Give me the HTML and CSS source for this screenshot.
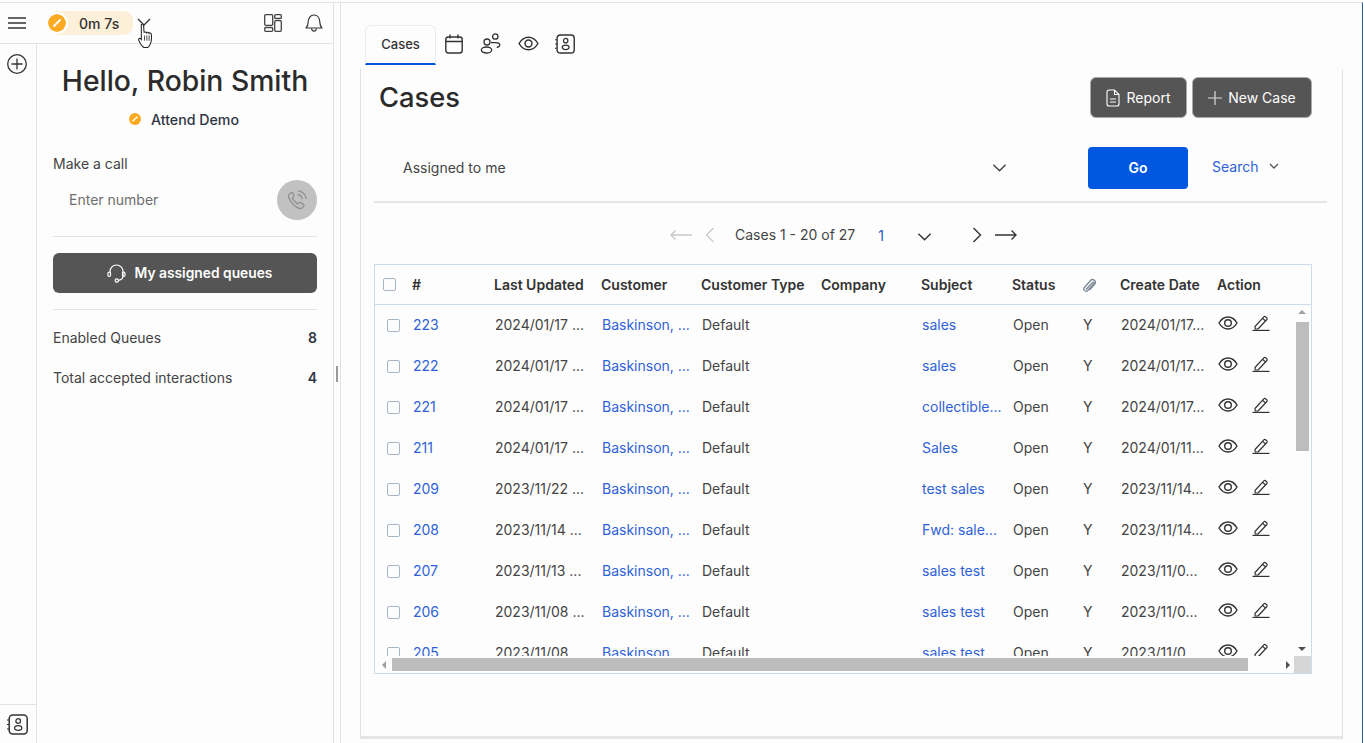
FILE: index.html
```html
<!DOCTYPE html>
<html lang="en">
<head>
  <meta charset="UTF-8">
  <title>Cases</title>
  <link rel="stylesheet" href="styles.css">
</head>
<body>
  <svg class="icon-defs" width="0" height="0">
    <symbol id="i-eye" viewBox="0 0 20 14">
      <path d="M1 7c2.200-3.800 5.300-6 9-6s6.800 2.200 9 6c-2.200 3.800-5.300 6-9 6s-6.800-2.200-9-6z" fill="none" stroke="currentColor" stroke-width="1.400"/>
      <circle cx="10" cy="7" r="3.300" fill="none" stroke="currentColor" stroke-width="1.400"/>
    </symbol>
    <symbol id="i-edit" viewBox="0 0 18 16">
      <path d="M3 11.500 11.800 1.800c.5-.5 1.200-.5 1.700-.1l1.300 1.100c.5.500.5 1.200.1 1.700L6 14H3.200z M10.500 3.200l3.200 2.900" fill="none" stroke="currentColor" stroke-width="1.200" stroke-linejoin="round"/>
      <path d="M0.500 15.400H17.500" stroke="currentColor" stroke-width="1.200"/>
    </symbol>
    <symbol id="i-contact" viewBox="0 0 21 21">
      <rect x="2.200" y="1" width="18" height="19" rx="3.500" fill="none" stroke="currentColor" stroke-width="1.500"/>
      <circle cx="11.200" cy="7" r="2.300" fill="none" stroke="currentColor" stroke-width="1.300"/>
      <ellipse cx="11.200" cy="14" rx="3.600" ry="2.300" fill="none" stroke="currentColor" stroke-width="1.300"/>
      <path d="M0 6h2M0 10.500h2M0 15h2" stroke="currentColor" stroke-width="1.100"/>
    </symbol>
    <symbol id="i-block" viewBox="0 0 18 18">
      <circle cx="9" cy="9" r="9" fill="#fbaa21"/>
      <path d="M5.500 12.500 12.500 5.500" stroke="#fff" stroke-width="2"/>
    </symbol>
    <symbol id="i-chev" viewBox="0 0 16 10">
      <path d="M1.500 1.500 8 8l6.500-6.500" fill="none" stroke="currentColor" stroke-width="1.500"/>
    </symbol>
  </svg>

  <div class="app">
    <aside class="side">
      <header class="side-top">
        <svg class="menu-icon" width="18" height="12" viewBox="0 0 18 12"><path d="M0 1h18M0 6h18M0 11h18" stroke="#333" stroke-width="1.300"/></svg>
        <div class="status-pill">
          <svg class="status-dot" width="18" height="18"><use href="#i-block"/></svg>
          <span>0m 7s</span>
        </div>
        <svg class="status-chev" width="14" height="8" viewBox="0 0 14 8"><path d="M1 1l6 6 6-6" fill="none" stroke="#333" stroke-width="1.300"/></svg>
        <svg class="top-layout" width="18" height="18" viewBox="0 0 18 18" fill="none" stroke="#444" stroke-width="1.300">
          <rect x=".7" y=".7" width="8" height="10.600" rx="1"/><rect x=".7" y="13.500" width="8" height="3.800" rx="1"/>
          <rect x="10.700" y=".7" width="6.600" height="3.800" rx="1"/><rect x="10.700" y="6.700" width="6.600" height="10.600" rx="1"/>
        </svg>
        <svg class="top-bell" width="18" height="18" viewBox="0 0 18 18" fill="none" stroke="#333" stroke-width="1.200">
          <path d="M1 14c1.500-1.300 2.100-2.500 2.100-5.500C3.100 4 5.500 1 9 1s5.900 3 5.900 7.500c0 3 .6 4.200 2.100 5.500z" stroke-linejoin="round"/>
          <path d="M6.500 14.500c.2 1.600 1.200 2.600 2.500 2.600s2.300-1 2.500-2.600"/>
        </svg>
        <!-- cursor from the screen capture -->
        <svg class="cursor" width="17" height="24" viewBox="1 1 14 23">
          <path d="M4 1.500c.8-.8 2-.4 2.200.8l.4 7c.3-1 2.100-1 2.400.2.500-.9 2-.8 2.300.4.600-.7 2-.4 2.200.8.500 3.200.4 6.600-.8 9.300-.6 1.500-1.500 3-2.700 3.500H6.500c-1.700-1-3.500-3.700-5-7-.5-1.300.7-2.200 1.800-1.400l.7.800z" fill="#fff" stroke="#222" stroke-width="1"/>
          <path d="M7 12v5M9.300 12v5M11.500 12v5" stroke="#222" stroke-width=".8"/>
        </svg>
      </header>
      <div class="side-body">
        <nav class="rail">
          <svg width="20" height="20" viewBox="0 0 20 20" fill="none" stroke="#333" stroke-width="1.300"><circle cx="10" cy="10" r="9.300"/><path d="M10 4.500v11M4.500 10h11"/></svg>
          <div class="rail-foot">
            <svg class="rail-contact" width="21" height="21"><use href="#i-contact"/></svg>
          </div>
        </nav>
        <section class="agent">
          <h2 class="hello">Hello, Robin Smith</h2>
          <div class="agent-status">
            <svg width="12" height="12"><use href="#i-block"/></svg>
            <span>Attend Demo</span>
          </div>
          <div class="call-label">Make a call</div>
          <div class="call-row">
            <span class="call-input">Enter number</span>
            <button class="call-btn">
              <svg width="22" height="22" viewBox="0 0 22 22" fill="none" stroke="#8f8f8f" stroke-width="1.300">
                <path d="M5.500 3.500 3.200 5.200c-1 .8-.9 2.400 0 4.300 1.500 3.300 4.400 6.900 7.800 8.900 2 1.100 3.900 1.600 5 .6l1.700-1.900c.5-.6.300-1.300-.3-1.700l-2.900-1.800c-.6-.4-1.200-.3-1.600.2l-.9 1c-1.800-.7-4.600-3.600-5.600-6l1-.9c.5-.5.600-1.100.3-1.700L6.900 3.800c-.4-.6-1-.7-1.400-.3z"/>
                <path d="M11.500 5.500c2.500.2 4.300 2 4.700 4.600M12 1.800c4.200.3 7.700 3.500 8.300 8"/>
              </svg>
            </button>
          </div>
          <button class="queues-btn">
            <svg width="19" height="19" viewBox="0 0 19 19" fill="none" stroke="#fff" stroke-width="1.200">
              <path d="M3 9V7.500C3 3.800 5.800 1 9.500 1S16 3.800 16 7.500V12c0 2.500-2 4-4.500 4.300"/>
              <rect x="1" y="8" width="2.500" height="4.500" rx="1.200"/><rect x="15.500" y="8" width="2.500" height="4.500" rx="1.200"/>
              <circle cx="9.800" cy="16.500" r="1.700"/>
            </svg>
            <span>My assigned queues</span>
          </button>
          <div class="stat"><span>Enabled Queues</span><b>8</b></div>
          <div class="stat"><span>Total accepted interactions</span><b>4</b></div>
        </section>
      </div>
    </aside>

    <div class="resizer"><i></i></div>

    <main class="main">
      <div class="tabs">
        <div class="tab">Cases</div>
        <svg class="tab-icon tab-cal" width="18" height="20" viewBox="0 0 18 20" fill="none" stroke="#333" stroke-width="1.400">
          <rect x=".8" y="3" width="16.400" height="16" rx="2.500"/><path d="M.8 7.500h16.400M5 .5v4M13 .5v4"/>
        </svg>
        <svg class="tab-icon tab-people" width="22" height="21" viewBox="0 0 21 21" fill="none" stroke="#333" stroke-width="1.300">
          <circle cx="6.500" cy="9" r="3"/><ellipse cx="6" cy="17" rx="5.200" ry="3"/><circle cx="14.800" cy="3.500" r="2.700"/>
          <path d="M10.500 9.500c2.500.6 6.500-.5 8 .8 1.800 1.600.4 3.800-2.300 4.200"/>
        </svg>
        <svg class="tab-icon tab-eye" width="21" height="15"><use href="#i-eye"/></svg>
        <svg class="tab-icon tab-contact" width="20" height="20"><use href="#i-contact"/></svg>
      </div>

      <section class="card">
        <div class="card-head">
          <h1>Cases</h1>
          <div class="card-actions">
            <button class="dark-btn report-btn">
              <svg width="14" height="18" viewBox="0 0 14 18" fill="none" stroke="#fff" stroke-width="1.100"><path d="M1 3a2 2 0 0 1 2-2h5.500L13 5.500V15a2 2 0 0 1-2 2H3a2 2 0 0 1-2-2z M8.500 1v4.500H13 M4 10h6M4 13h6"/></svg>
              <span>Report</span>
            </button>
            <button class="dark-btn new-btn">
              <svg width="14" height="14" viewBox="0 0 14 14" stroke="#ddd" stroke-width="1.200"><path d="M7 0v14M0 7h14"/></svg>
              <span>New Case</span>
            </button>
          </div>
        </div>

        <div class="filter">
          <div class="filter-select">
            <span>Assigned to me</span>
            <svg width="15" height="10"><use href="#i-chev"/></svg>
          </div>
          <button class="go-btn">Go</button>
          <a class="search-link">Search</a>
          <svg class="search-chev" width="10" height="6" viewBox="0 0 10 6"><path d="M1 1l4 4 4-4" fill="none" stroke="#555" stroke-width="1.300"/></svg>
        </div>

        <div class="pager">
          <svg class="off pg-first" width="22" height="10" viewBox="0 0 22 10" fill="none" stroke="currentColor" stroke-width="1.400"><path d="M22 5H1M5.500.5 1 5l4.500 4.500"/></svg>
          <svg class="off pg-prev" width="10" height="16" viewBox="0 0 10 16" fill="none" stroke="currentColor" stroke-width="1.300"><path d="M8.500 1 1.500 8l7 7"/></svg>
          <span class="pg-text">Cases 1 - 20 of 27</span>
          <span class="pg-num">1</span>
          <svg class="pg-drop" width="15" height="10"><use href="#i-chev"/></svg>
          <svg class="pg-next" width="10" height="16" viewBox="0 0 10 16" fill="none" stroke="#333" stroke-width="1.400"><path d="M1.500 1l7 7-7 7"/></svg>
          <svg class="pg-last" width="22" height="10" viewBox="0 0 22 10" fill="none" stroke="#333" stroke-width="1.400"><path d="M0 5h21M16.500.5 21 5l-4.500 4.500"/></svg>
        </div>

        <div class="grid">
          <div class="row head-row">
            <div><span class="check head-check"></span></div>
            <div>#</div><div>Last Updated</div><div>Customer</div><div>Customer Type</div><div>Company</div><div>Subject</div><div>Status</div>
            <div><svg class="clip" width="17" height="15" viewBox="0 0 16 15" fill="none" stroke="#7b8794" stroke-width="1.300"><path d="M4.500 12.500 11 5.500c.8-.9 2.200.4 1.400 1.300L6 13.700c-1.700 1.700-5 -.8-3.100-3.200L9 3.500c2.200-2.500 6.500.6 4.300 3.500L8 13"/></svg></div>
            <div>Create Date</div><div>Action</div>
          </div>

          <div class="row"><div><span class="check"></span></div><div><a>223</a></div><div>2024/01/17 ...</div><div><a>Baskinson, ...</a></div><div>Default</div><div></div><div><a>sales</a></div><div>Open</div><div>Y</div><div>2024/01/17...</div><div class="acts"><svg class="eye" width="20" height="14"><use href="#i-eye"/></svg><svg class="edit" width="18" height="16"><use href="#i-edit"/></svg></div></div>
          <div class="row"><div><span class="check"></span></div><div><a>222</a></div><div>2024/01/17 ...</div><div><a>Baskinson, ...</a></div><div>Default</div><div></div><div><a>sales</a></div><div>Open</div><div>Y</div><div>2024/01/17...</div><div class="acts"><svg class="eye" width="20" height="14"><use href="#i-eye"/></svg><svg class="edit" width="18" height="16"><use href="#i-edit"/></svg></div></div>
          <div class="row"><div><span class="check"></span></div><div><a>221</a></div><div>2024/01/17 ...</div><div><a>Baskinson, ...</a></div><div>Default</div><div></div><div><a>collectible...</a></div><div>Open</div><div>Y</div><div>2024/01/17...</div><div class="acts"><svg class="eye" width="20" height="14"><use href="#i-eye"/></svg><svg class="edit" width="18" height="16"><use href="#i-edit"/></svg></div></div>
          <div class="row"><div><span class="check"></span></div><div><a>211</a></div><div>2024/01/17 ...</div><div><a>Baskinson, ...</a></div><div>Default</div><div></div><div><a>Sales</a></div><div>Open</div><div>Y</div><div>2024/01/11...</div><div class="acts"><svg class="eye" width="20" height="14"><use href="#i-eye"/></svg><svg class="edit" width="18" height="16"><use href="#i-edit"/></svg></div></div>
          <div class="row"><div><span class="check"></span></div><div><a>209</a></div><div>2023/11/22 ...</div><div><a>Baskinson, ...</a></div><div>Default</div><div></div><div><a>test sales</a></div><div>Open</div><div>Y</div><div>2023/11/14...</div><div class="acts"><svg class="eye" width="20" height="14"><use href="#i-eye"/></svg><svg class="edit" width="18" height="16"><use href="#i-edit"/></svg></div></div>
          <div class="row"><div><span class="check"></span></div><div><a>208</a></div><div>2023/11/14 ...</div><div><a>Baskinson, ...</a></div><div>Default</div><div></div><div><a>Fwd: sale...</a></div><div>Open</div><div>Y</div><div>2023/11/14...</div><div class="acts"><svg class="eye" width="20" height="14"><use href="#i-eye"/></svg><svg class="edit" width="18" height="16"><use href="#i-edit"/></svg></div></div>
          <div class="row"><div><span class="check"></span></div><div><a>207</a></div><div>2023/11/13 ...</div><div><a>Baskinson, ...</a></div><div>Default</div><div></div><div><a>sales test</a></div><div>Open</div><div>Y</div><div>2023/11/0...</div><div class="acts"><svg class="eye" width="20" height="14"><use href="#i-eye"/></svg><svg class="edit" width="18" height="16"><use href="#i-edit"/></svg></div></div>
          <div class="row"><div><span class="check"></span></div><div><a>206</a></div><div>2023/11/08 ...</div><div><a>Baskinson, ...</a></div><div>Default</div><div></div><div><a>sales test</a></div><div>Open</div><div>Y</div><div>2023/11/0...</div><div class="acts"><svg class="eye" width="20" height="14"><use href="#i-eye"/></svg><svg class="edit" width="18" height="16"><use href="#i-edit"/></svg></div></div>
          <div class="row"><div><span class="check"></span></div><div><a>205</a></div><div>2023/11/08 ...</div><div><a>Baskinson, ...</a></div><div>Default</div><div></div><div><a>sales test</a></div><div>Open</div><div>Y</div><div>2023/11/0...</div><div class="acts"><svg class="eye" width="20" height="14"><use href="#i-eye"/></svg><svg class="edit" width="18" height="16"><use href="#i-edit"/></svg></div></div>

          <!-- scrollbars sit on top of the rows -->
          <div class="vbar"><i class="arrow-up"></i><b></b><i class="arrow-down"></i></div>
          <div class="hbar"><i class="arrow-left"></i><b></b><i class="arrow-right"></i></div>
          <div class="corner"></div>
        </div>
      </section>
    </main>
  </div>
</body>
</html>
```

FILE: styles.css
```css
* {
  box-sizing: border-box;
  margin: 0;
  padding: 0;
}

html, body {
  height: 100%;
  overflow: hidden;
}

body {
  font-family: Inter, "Noto Sans", sans-serif;
  font-size: 14px;
  color: #333;
  background-color: #fdfdfd;
  padding-top: 2px;
}

button {
  font-family: inherit;
  border: none;
}

svg {
  display: block;
  flex: none;
}

.icon-defs {
  position: absolute;
}

.app {
  display: flex;
  height: 741px;
  border-top: 1px solid #e4e4e4;
  border-right: 1px solid #1f5f99;
}

/* Panel izquierdo */
.side {
  width: 334px;
  flex: none;
  border-right: 1px solid #e2e2e2;
  display: flex;
  flex-direction: column;
}

.side-top {
  height: 41px;
  flex: none;
  position: relative;
  display: flex;
  align-items: center;
  border-bottom: 1px solid #e2e2e2;
  padding-left: 8px;
}

.status-pill {
  display: flex;
  align-items: center;
  width: 85px;
  height: 24px;
  margin-left: 22px;
  background-color: #fdf0d9;
  border-radius: 9px;
  font-weight: 500;
  color: #333;
}

.status-dot {
  border-radius: 50%;
  box-shadow: 0 0 0 2px #fff;
}

.status-pill span {
  margin-left: 13px;
}

.status-chev {
  margin-left: 4px;
  margin-top: -3px;
}

.top-layout {
  margin-left: 113px;
  margin-top: -1px;
}

.top-bell {
  margin-left: 23px;
  margin-top: -1px;
}

.cursor {
  position: absolute;
  left: 137px;
  top: 21px;
}

.side-body {
  flex: 1;
  display: flex;
  min-height: 0;
}

.rail {
  width: 37px;
  flex: none;
  border-right: 1px solid #e2e2e2;
  padding: 10px 0 0 7px;
  position: relative;
  display: flex;
  flex-direction: column;
  justify-content: space-between;
}

.rail-foot {
  margin-left: -7px;
  width: 36px;
  height: 39px;
  border-top: 1px solid #e2e2e2;
  padding: 9px 0 0 7px;
}

.agent {
  flex: 1;
  padding: 18px 16px 0;
}

.hello {
  font-size: 28.300px;
  font-weight: 500;
  line-height: 38px;
  color: #2b2b2b;
  text-align: center;
}

.agent-status {
  display: flex;
  justify-content: center;
  align-items: center;
  gap: 10px;
  margin-top: 9px;
  height: 20px;
  font-size: 14.200px;
  font-weight: 500;
  color: #2f3542;
  padding-right: 2px;
}

.call-label {
  margin-top: 25px;
  line-height: 20px;
  color: #444;
}

.call-row {
  display: flex;
  justify-content: space-between;
  align-items: center;
  margin-top: 6px;
  padding: 0 0 16px 16px;
  border-bottom: 1px solid #e4e4e4;
}

.call-input {
  color: #6f6f6f;
  margin-top: -2px;
}

.call-btn {
  width: 40px;
  height: 40px;
  border-radius: 50%;
  background-color: #c1c1c1;
  display: flex;
  align-items: center;
  justify-content: center;
}

.queues-btn {
  width: 100%;
  height: 40px;
  margin-top: 16px;
  margin-bottom: 16px;
  padding-left: 9px;
  background-color: #555;
  color: #fff;
  border-radius: 6px;
  font-size: 13.800px;
  font-weight: 600;
  display: flex;
  align-items: center;
  justify-content: center;
  gap: 9px;
}

.stat {
  display: flex;
  justify-content: space-between;
  align-items: center;
  height: 40px;
  color: #444;
}

.queues-btn + .stat {
  border-top: 1px solid #e4e4e4;
  height: 48px;
  padding-top: 7px;
}

.stat b {
  font-weight: 600;
  color: #2f3542;
}

.resizer {
  width: 6px;
  flex: none;
  padding: 363px 0 0 2px;
}

.resizer i {
  display: block;
  width: 2px;
  height: 16px;
  background-color: #999;
}

/* Area principal */
.main {
  flex: 1;
  min-width: 0;
  border-left: 1px solid #e2e2e2;
  padding-left: 19px;
}

.tabs {
  display: flex;
  align-items: center;
  height: 40px;
  margin-top: 22px;
  padding-left: 5px;
}

.tab {
  width: 71px;
  height: 40px;
  display: flex;
  align-items: center;
  justify-content: center;
  font-size: 13px;
  font-weight: 500;
  color: #333;
  border: 1px solid #ececec;
  border-bottom: 2px solid #0052dd;
  border-radius: 6px 6px 0 0;
  margin-top: -1px;
}

.tab-icon {
  color: #333;
  margin-top: -3px;
}

.tab-cal {
  margin-left: 9px;
}

.tab-people {
  margin-left: 17px;
}

.tab-eye {
  margin-left: 16px;
}

.tab-contact {
  margin-left: 16px;
}

.card {
  width: 983px;
  height: 670px;
  margin-top: 4px;
  border-left: 1px solid #e2e2e2;
  border-right: 1px solid #e2e2e2;
  border-bottom: 3px solid #e6e6e6;
  padding-top: 9px;
}

.card-head {
  display: flex;
  justify-content: space-between;
  height: 40px;
  padding: 0 30px 0 18px;
}

.card-head h1 {
  font-size: 27.300px;
  font-weight: 500;
  line-height: 40px;
  color: #2b2b2b;
}

.card-actions {
  display: flex;
  gap: 5px;
  height: 41px;
  margin-top: -1px;
}

.dark-btn {
  height: 41px;
  background-color: #555;
  border: 1px solid #aaa;
  border-radius: 6px;
  color: #fff;
  font-size: 14px;
  font-weight: 400;
  display: flex;
  align-items: center;
  justify-content: center;
  gap: 6px;
}

.report-btn {
  width: 97px;
}

.new-btn {
  width: 120px;
}

.filter {
  display: flex;
  align-items: center;
  width: 953px;
  margin: 29px 0 0 13px;
  padding: 0 0 12px 29px;
  border-bottom: 2px solid #e3e5e8;
}

.filter-select {
  width: 604px;
  display: flex;
  justify-content: space-between;
  align-items: center;
  color: #444;
}

.filter-select span {
  margin-top: -2px;
}

.go-btn {
  width: 100px;
  height: 42px;
  margin-left: 81px;
  padding-bottom: 2px;
  background-color: #0057e0;
  color: #fff;
  font-size: 14px;
  font-weight: 600;
  border-radius: 4px;
}

.search-link {
  margin-left: 24px;
  color: #2f62d8;
  margin-top: -3px;
}

.search-chev {
  margin-left: 11px;
  margin-top: -4px;
}

.pager {
  display: flex;
  align-items: center;
  height: 24px;
  margin-top: 20px;
  padding-left: 309px;
  color: #444;
}

.off {
  color: #c9c9c9;
}

.pg-prev {
  margin-left: 13px;
}

.pg-text {
  margin-left: 20px;
  margin-top: -2px;
  white-space: nowrap;
}

.pg-num {
  margin-left: 23px;
  color: #1f5fc4;
}

.pg-drop {
  margin-left: 33px;
  margin-top: 3px;
  color: #333;
}

.pg-next {
  margin-left: 40px;
}

.pg-last {
  margin-left: 13px;
}

/* Tabla */
.grid {
  position: relative;
  overflow: hidden;
  width: 938px;
  height: 410px;
  margin: 17px 0 0 13px;
  border: 1px solid #cfdbe8;
}

.row {
  display: grid;
  grid-template-columns: 37px 82px 107px 100px 120px 100px 91px 70px 38px 97px 1fr;
  align-items: center;
  height: 41px;
  padding-bottom: 2px;
  color: #444;
  white-space: nowrap;
}

.row > div {
  padding-left: 1px;
}

.row a {
  color: #2f62d8;
}

.head-row {
  height: 40px;
  padding-bottom: 0;
  border-bottom: 1px solid #cfdbe8;
  font-size: 14px;
  font-weight: 600;
  color: #333;
}

.head-row > div {
  padding-left: 0;
}

.check {
  display: block;
  width: 13px;
  height: 13px;
  margin-left: 11px;
  margin-top: 1px;
  border: 1px solid #a9b6c6;
  border-radius: 2px;
}

.head-check {
  margin-left: 8px;
  margin-top: 0;
}

.clip {
  margin-left: -1px;
}

.acts {
  display: flex;
  align-items: center;
  gap: 14px;
  margin-top: -3px;
  color: #333;
}

.vbar {
  position: absolute;
  top: 40px;
  right: 0;
  width: 17px;
  height: 351px;
  background-color: #fdfdfd;
  padding: 17px 2px 0;
}

.vbar b {
  display: block;
  width: 13px;
  height: 129px;
  background-color: #bdbdbd;
}

.arrow-up,
.arrow-down,
.arrow-left,
.arrow-right {
  position: absolute;
  width: 0;
  height: 0;
  border: 4px solid transparent;
}

.arrow-up {
  top: 1px;
  left: 4px;
  border-bottom-color: #a0a0a0;
}

.arrow-down {
  bottom: 1px;
  left: 4px;
  border-top-color: #505050;
}

.hbar {
  position: absolute;
  left: 0;
  bottom: 0;
  right: 17px;
  height: 17px;
  background-color: #fdfdfd;
  padding: 2px 0 2px 17px;
}

.hbar b {
  display: block;
  width: 856px;
  height: 13px;
  background-color: #bdbdbd;
}

.arrow-left {
  top: 5px;
  left: 3px;
  border-right-color: #a0a0a0;
}

.arrow-right {
  top: 5px;
  right: 0;
  border-left-color: #505050;
}

.corner {
  position: absolute;
  right: 0;
  bottom: 0;
  width: 17px;
  height: 17px;
  background-color: #d6d6d6;
}
```
